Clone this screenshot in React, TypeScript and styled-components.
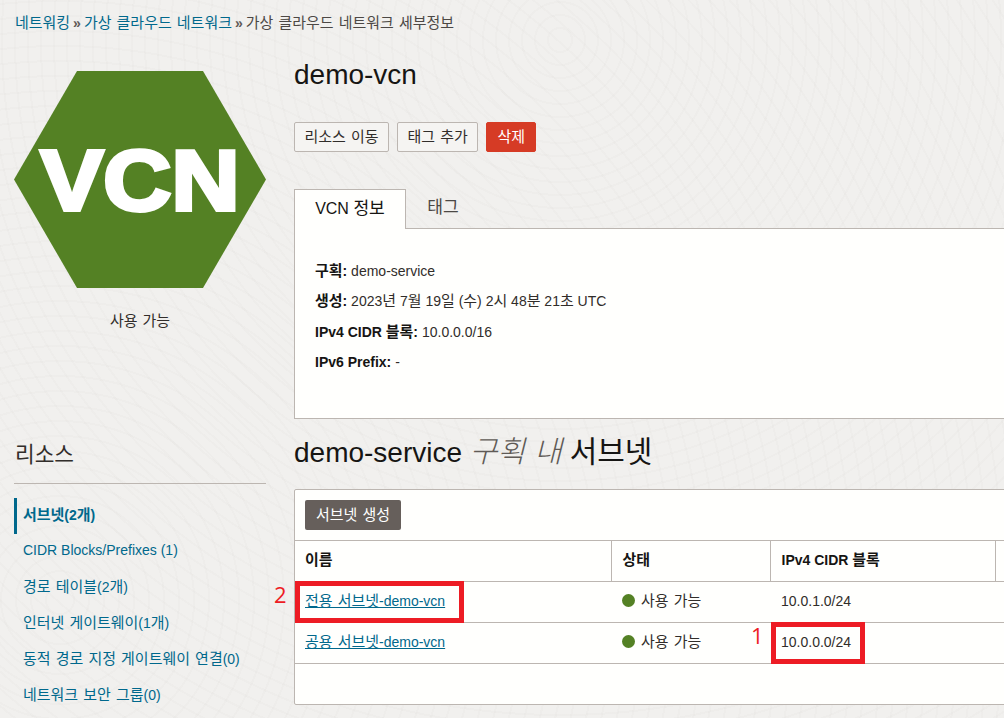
import styled, { createGlobalStyle } from "styled-components";

const GlobalStyle = createGlobalStyle`
  html, body {
    margin: 0;
    padding: 0;
  }
  body {
    font-family: "Liberation Sans", "Noto Sans CJK KR", sans-serif;
    color: #161513;
    background: #f1f0ee;
  }
`;

// hangul runs come out a bit wider in the reference, so they get their own size
const Ko = styled.span`
  font-size: 1.07em;
  word-spacing: 1px;
`;

const T = ({ children }: { children: string }) => (
  <>
    {children.split(/([가-힣]+(?: [가-힣]+)*)/).map((part, i) =>
      i % 2 === 1 ? <Ko key={i}>{part}</Ko> : part
    )}
  </>
);

const resources = [
  { label: "서브넷(2개)", active: true },
  { label: "CIDR Blocks/Prefixes (1)" },
  { label: "경로 테이블(2개)" },
  { label: "인터넷 게이트웨이(1개)" },
  { label: "동적 경로 지정 게이트웨이 연결(0)" },
  { label: "네트워크 보안 그룹(0)" },
];

const App = () => {
  return (
    <>
      <GlobalStyle />
      <Page>
        <Breadcrumb>
          <Crumb href="#"><T>네트워킹</T></Crumb>
          <Sep>»</Sep>
          <Crumb href="#"><T>가상 클라우드 네트워크</T></Crumb>
          <Sep>»</Sep>
          <span><T>가상 클라우드 네트워크 세부정보</T></span>
        </Breadcrumb>

        <Columns>
          <Side>
            <Hexagon viewBox="0 0 252 217" aria-label="VCN">
              <polygon points="63,0 189,0 252,108.5 189,217 63,217 0,108.5" fill="#548124" />
              <text
                x="126"
                y="139"
                textAnchor="middle"
                fontFamily="Liberation Sans, sans-serif"
                fontWeight="700"
                fontSize="86"
                stroke="#ffffff"
                strokeWidth="4"
                textLength="199"
                lengthAdjust="spacingAndGlyphs"
                fill="#ffffff"
              >
                VCN
              </text>
            </Hexagon>
            <SideStatus><T>사용 가능</T></SideStatus>

            <SideTitle><T>리소스</T></SideTitle>
            <SideNav>
              {resources.map((r) => (
                <SideItem key={r.label} $active={r.active}>
                  <T>{r.label}</T>
                </SideItem>
              ))}
            </SideNav>
          </Side>

          <Main>
            <Title>demo-vcn</Title>
            <Actions>
              <Button><T>리소스 이동</T></Button>
              <Button><T>태그 추가</T></Button>
              <DangerButton><T>삭제</T></DangerButton>
            </Actions>

            <Tabs>
              <Tab $active><T>VCN 정보</T></Tab>
              <Tab><T>태그</T></Tab>
            </Tabs>
            <InfoPanel>
              <InfoLine>
                <b><T>구획:</T></b> demo-service
              </InfoLine>
              <InfoLine>
                <b><T>생성:</T></b> <T>2023년 7월 19일 (수) 2시 48분 21초 UTC</T>
              </InfoLine>
              <InfoLine>
                <b><T>IPv4 CIDR 블록:</T></b> 10.0.0.0/16
              </InfoLine>
              <InfoLine>
                <b>IPv6 Prefix:</b> -
              </InfoLine>
            </InfoPanel>

            <SectionTitle>
              demo-service <em><T>구획 내</T></em> <T>서브넷</T>
            </SectionTitle>

            <Card>
              <CardBar>
                <CreateButton><T>서브넷 생성</T></CreateButton>
              </CardBar>
              <Table>
                <colgroup>
                  <col width={316} />
                  <col width={159} />
                  <col width={225} />
                  <col />
                </colgroup>
                <thead>
                  <tr>
                    <Th><T>이름</T></Th>
                    <Th><T>상태</T></Th>
                    <Th><T>IPv4 CIDR 블록</T></Th>
                    <Th />
                  </tr>
                </thead>
                <tbody>
                  <tr>
                    <Td>
                      <Mark $left={0} $width={169} />
                      <MarkLabel $left={-21}>2</MarkLabel>
                      <SubnetLink href="#"><T>전용 서브넷-demo-vcn</T></SubnetLink>
                    </Td>
                    <Td>
                      <Dot />
                      <T>사용 가능</T>
                    </Td>
                    <Td>10.0.1.0/24</Td>
                    <Td />
                  </tr>
                  <tr>
                    <Td>
                      <SubnetLink href="#"><T>공용 서브넷-demo-vcn</T></SubnetLink>
                    </Td>
                    <Td>
                      <Dot />
                      <T>사용 가능</T>
                    </Td>
                    <Td>
                      <Mark $left={1} $width={94} />
                      <MarkLabel $left={-19}>1</MarkLabel>
                      10.0.0.0/24
                    </Td>
                    <Td />
                  </tr>
                </tbody>
              </Table>
              <CardFoot />
            </Card>
          </Main>
        </Columns>
      </Page>
    </>
  );
};

const Page = styled.div`
  width: 1004px;
  height: 718px;
  overflow: hidden;
  box-sizing: border-box;
  padding: 15px 0 0 14px;
  background-color: #f1f0ee;
  background-image:
    repeating-radial-gradient(circle at 560px 40px, transparent 0 11px, rgba(120, 110, 100, 0.025) 11px 13px),
    repeating-radial-gradient(circle at 60px 600px, transparent 0 13px, rgba(120, 110, 100, 0.025) 13px 15px);
`;

const Breadcrumb = styled.div`
  display: flex;
  align-items: center;
  height: 16px;
  padding-left: 1px;
  font-size: 14px;
  line-height: 16px;
  color: #4c4845;
`;

const Crumb = styled.a`
  color: #00688c;
  text-decoration: none;
`;

const Sep = styled.span`
  margin: 0 3px;
  font-weight: 700;
  color: #5f5a56;
`;

const Columns = styled.div`
  display: flex;
  gap: 28px;
  margin-top: 26px;
`;

const Side = styled.aside`
  flex: 0 0 252px;
  width: 252px;
  padding-top: 14px;
`;

const Hexagon = styled.svg`
  display: block;
  width: 252px;
  height: 217px;
`;

const SideStatus = styled.div`
  margin-top: 25px;
  text-align: center;
  font-size: 14px;
  line-height: 16px;
  color: #312d2a;
`;

const SideTitle = styled.h3`
  margin: 114px 0 0;
  padding: 0 1px 16px;
  font-size: 20px;
  line-height: 24px;
  font-weight: 400;
  color: #312d2a;
  border-bottom: 1px solid #bcb6b1;
`;

const SideNav = styled.ul`
  list-style: none;
  margin: 14px 0 0;
  padding: 0;
`;

const SideItem = styled.li<{ $active?: boolean }>`
  height: 36px;
  line-height: 33px;
  box-sizing: border-box;
  padding-left: ${(p) => (p.$active ? "6px" : "9px")};
  border-left: ${(p) => (p.$active ? "3px solid #00688c" : "0")};
  font-size: 14px;
  font-weight: ${(p) => (p.$active ? 700 : 400)};
  color: #00688c;
  white-space: nowrap;
`;

const Main = styled.main`
  flex: 0 0 740px;
  width: 740px;
`;

const Title = styled.h1`
  margin: 0;
  height: 34px;
  font-size: 28px;
  line-height: 35px;
  font-weight: 400;
  color: #161513;
`;

const Actions = styled.div`
  display: flex;
  gap: 8px;
  margin-top: 31px;
`;

const Button = styled.button`
  height: 30px;
  box-sizing: border-box;
  padding: 0 9.5px;
  font-family: inherit;
  font-size: 14px;
  line-height: 16px;
  color: #312d2a;
  background: #f5f4f2;
  border: 1px solid #bcb6b1;
  border-radius: 2px;
`;

const DangerButton = styled(Button)`
  min-width: 50px;
  color: #ffffff;
  background: #d63b25;
  border-color: #d63b25;
`;

const Tabs = styled.div`
  display: flex;
  margin-top: 37px;
  height: 39px;
  position: relative;
  z-index: 1;
`;

const Tab = styled.div<{ $active?: boolean }>`
  box-sizing: border-box;
  height: ${(p) => (p.$active ? "40px" : "38px")};
  width: ${(p) => (p.$active ? "112px" : "74px")};
  text-align: center;
  font-size: 16px;
  line-height: 37px;
  color: ${(p) => (p.$active ? "#161513" : "#4c4845")};
  background: ${(p) => (p.$active ? "#fffffd" : "transparent")};
  border: ${(p) => (p.$active ? "1px solid #bcb6b1" : "0")};
  border-bottom: 0;
`;

const InfoPanel = styled.section`
  box-sizing: border-box;
  height: 191px;
  padding: 27px 20px 0;
  background: #fffffd;
  border: 1px solid #bcb6b1;
`;

const InfoLine = styled.div`
  height: 30.3px;
  line-height: 30px;
  font-size: 14px;
  color: #312d2a;

  b {
    color: #161513;
  }
`;

const SectionTitle = styled.h2`
  margin: 15px 0 0;
  height: 36px;
  font-size: 28px;
  line-height: 36px;
  font-weight: 400;
  color: #161513;

  em {
    color: #5f5a56;
    font-weight: 300;
  }
`;

const Card = styled.section`
  margin-top: 19px;
  box-sizing: border-box;
  height: 216px;
  background: #fffffd;
  border: 1px solid #bcb6b1;
  border-radius: 2px;
`;

const CardBar = styled.div`
  height: 50px;
  box-sizing: border-box;
  padding: 10px;
`;

const CreateButton = styled.button`
  height: 30px;
  width: 96px;
  padding: 0;
  font-family: inherit;
  font-size: 14px;
  line-height: 16px;
  color: #ffffff;
  background: #665f5b;
  border: 0;
  border-radius: 2px;
`;

const Table = styled.table`
  width: 100%;
  table-layout: fixed;
  border-collapse: collapse;
  font-size: 14px;
  line-height: 16px;
`;

const Th = styled.th`
  height: 41px;
  box-sizing: border-box;
  padding: 0 10px 2px 11px;
  text-align: left;
  font-weight: 700;
  color: #161513;
  border-top: 1px solid #bcb6b1;
  border-bottom: 1px solid #bcb6b1;
  border-left: 1px solid #bcb6b1;

  &:first-child {
    padding-left: 10px;
    border-left: 0;
  }
`;

const Td = styled.td`
  position: relative;
  height: 41px;
  box-sizing: border-box;
  padding: 0 10px 2px 11px;
  color: #312d2a;
  border-bottom: 1px solid #bcb6b1;

  &:first-child {
    padding-left: 10px;
  }
`;

const SubnetLink = styled.a`
  color: #00688c;
  text-decoration: underline;
`;

const Dot = styled.span`
  display: inline-block;
  width: 13px;
  height: 13px;
  margin-right: 6px;
  border-radius: 50%;
  background: #548124;
  vertical-align: -1px;
`;

const Mark = styled.span<{ $left: number; $width: number }>`
  position: absolute;
  left: ${(p) => p.$left}px;
  top: -1px;
  width: ${(p) => p.$width}px;
  height: 42px;
  box-sizing: border-box;
  border: 5px solid #ed1c24;
`;

const MarkLabel = styled.span<{ $left: number }>`
  position: absolute;
  left: ${(p) => p.$left}px;
  top: 0;
  font-family: "Open Sans", sans-serif;
  font-size: 22px;
  line-height: 24px;
  color: #ed1c24;
`;

const CardFoot = styled.div`
  height: 41px;
`;

export default App;
